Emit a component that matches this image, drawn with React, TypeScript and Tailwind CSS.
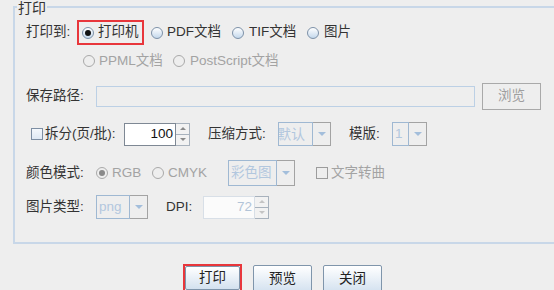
import React from 'react';

const FONT = "font-['Liberation_Sans','Noto_Sans_CJK_SC',sans-serif]";

function Radio({ checked = false, disabled = false }: { checked?: boolean; disabled?: boolean }) {
  return (
    <span
      className={
        disabled
          ? 'w-[12px] h-[12px] shrink-0 rounded-full border border-[#a9a9a9] bg-[#eeeeee] flex items-center justify-center'
          : 'w-[12px] h-[12px] shrink-0 rounded-full border border-[#7d91a8] bg-linear-to-b from-[#ffffff] to-[#c4d8ec] flex items-center justify-center'
      }
    >
      {checked && (
        <span className={disabled ? 'w-[6px] h-[6px] rounded-full bg-[#8a8a8a]' : 'w-[6px] h-[6px] rounded-full bg-[#111111]'} />
      )}
    </span>
  );
}

function Checkbox({ disabled = false }: { disabled?: boolean }) {
  return (
    <span
      className={
        disabled
          ? 'w-[12px] h-[12px] shrink-0 border border-[#9c9c9c] bg-[#eeeeee]'
          : 'w-[12px] h-[12px] shrink-0 border border-[#7d8ea3] bg-linear-to-b from-[#f4f8fc] to-[#dfe9f4]'
      }
    />
  );
}

function ArrowDown() {
  return <span className="w-0 h-0 border-l-[4px] border-r-[4px] border-t-[4px] border-l-transparent border-r-transparent border-t-[#a3bedb]" />;
}

function ArrowUpSmall({ color }: { color: string }) {
  return <span className={`w-0 h-0 border-l-[3px] border-r-[3px] border-b-[3px] border-l-transparent border-r-transparent ${color}`} />;
}

function ArrowDownSmall({ color }: { color: string }) {
  return <span className={`w-0 h-0 border-l-[3px] border-r-[3px] border-t-[3px] border-l-transparent border-r-transparent ${color}`} />;
}

function Combo({ text, fieldW, h, clip = false }: { text: string; fieldW: string; h: string; clip?: boolean }) {
  return (
    <div className={`flex ${h}`}>
      <div className={`${fieldW} h-full border border-[#9fb8d2] bg-[#eeeeee] overflow-hidden flex items-center text-[#b2c7de] whitespace-nowrap`}>
        <span className={clip ? 'text-[14px] -ml-[2px]' : 'pl-[2px]'}>{text}</span>
      </div>
      <div className="w-[18px] h-full border border-l-0 border-[#a3a3a3] bg-[#eeeeee] flex items-center justify-center">
        <ArrowDown />
      </div>
    </div>
  );
}

function Spinner({ value, disabled = false }: { value: string; disabled?: boolean }) {
  return (
    <div className="flex h-[23px]">
      <div
        className={
          disabled
            ? 'w-[52px] h-full border border-[#d8dfe7] bg-[#fbfbfb] flex items-center justify-end pr-[2px] text-[#b2c4d8]'
            : 'w-[52px] h-full border border-[#7e8894] bg-white flex items-center justify-end pr-[2px] text-[#111111]'
        }
      >
        {value}
      </div>
      <div className="w-[14px] h-full flex flex-col">
        <div className="flex-1 border border-l-0 border-[#a8b2bd] bg-[#f2f2f2] flex items-center justify-center">
          <ArrowUpSmall color={disabled ? 'border-b-[#c4c4c4]' : 'border-b-[#8a8a8a]'} />
        </div>
        <div className="flex-1 border border-l-0 border-t-0 border-[#a8b2bd] bg-[#f2f2f2] flex items-center justify-center">
          <ArrowDownSmall color={disabled ? 'border-t-[#c4c4c4]' : 'border-t-[#8a8a8a]'} />
        </div>
      </div>
    </div>
  );
}

function DialogButton({ label, focused = false }: { label: string; focused?: boolean }) {
  return (
    <div
      className={
        focused
          ? 'w-[59px] h-[28px] border-2 border-[#e8363b] flex'
          : 'w-[59px] h-[28px] flex mt-[1px]'
      }
    >
      <div className="flex-1 border border-[#7f95ab] rounded-[2px] bg-linear-to-b from-[#ffffff] to-[#d3e1ef] flex items-center justify-center text-[#222222]">
        {label}
      </div>
    </div>
  );
}

export default function App() {
  return (
    <div className={`w-[554px] h-[290px] overflow-hidden bg-[#eeeeee] text-[13.5px] text-[#333333] ${FONT} flex flex-col`}>
      <fieldset className="-mt-[2px] ml-[13px] w-[541px] border-2 border-r-0 border-[#c8d7e8] pb-[23px]">
        <legend className="ml-[2px] px-[1px] pt-[2px] leading-[16px] text-[14px] text-[#333333]">打印</legend>

        {/* 打印到 */}
        <div className="mt-[4px] h-[25px] pl-[11px] flex items-center">
          <span className="w-[51px]">打印到:</span>
          <div className="w-[67px] h-[25px] border-2 border-[#e8363b] flex items-center pl-[3px] gap-[4px]">
            <Radio checked />
            <span>打印机</span>
          </div>
          <div className="w-[81px] ml-[7px] flex items-center gap-[4px]">
            <Radio />
            <span>PDF文档</span>
          </div>
          <div className="w-[75px] flex items-center gap-[5px]">
            <Radio />
            <span>TIF文档</span>
          </div>
          <div className="flex items-center gap-[5px]">
            <Radio />
            <span>图片</span>
          </div>
        </div>

        <div className="mt-[4px] h-[24px] pl-[68px] flex items-center text-[#a3a3a3]">
          <div className="w-[90px] flex items-center gap-[4px]">
            <Radio disabled />
            <span>PPML文档</span>
          </div>
          <div className="flex items-center gap-[5px]">
            <Radio disabled />
            <span>PostScript文档</span>
          </div>
        </div>

        {/* 保存路径 */}
        <div className="mt-[9px] h-[28px] pl-[11px] flex items-center">
          <span className="w-[70px]">保存路径:</span>
          <div className="w-[379px] h-[21px] border border-[#bcd0e5] bg-[#eeeeee]" />
          <div className="ml-[7px] w-[59px] h-[27px] border border-[#a9a9a9] bg-[#eeeeee] flex items-center justify-center text-[#9e9e9e]">
            浏览
          </div>
        </div>

        {/* 拆分 / 压缩 / 模版 */}
        <div className="mt-[12px] h-[24px] pl-[16px] flex items-center">
          <div className="w-[93px] flex items-center gap-[2px]">
            <Checkbox />
            <span className="whitespace-nowrap">拆分(页/批):</span>
          </div>
          <Spinner value="100" />
          <span className="ml-[18px] w-[70px]">压缩方式:</span>
          <Combo text="默认" fieldW="w-[35px]" h="h-[24px]" clip />
          <span className="ml-[18px] w-[43px]">模版:</span>
          <Combo text="1" fieldW="w-[17px]" h="h-[24px]" />
        </div>

        {/* 颜色模式 */}
        <div className="mt-[14px] h-[26px] pl-[11px] flex items-center">
          <span className="w-[70px]">颜色模式:</span>
          <div className="w-[56px] flex items-center gap-[4px] text-[#a3a3a3]">
            <Radio checked disabled />
            <span>RGB</span>
          </div>
          <div className="w-[76px] flex items-center gap-[4px] text-[#a3a3a3]">
            <Radio disabled />
            <span>CMYK</span>
          </div>
          <Combo text="彩色图" fieldW="w-[49px]" h="h-[26px]" />
          <div className="ml-[21px] flex items-center gap-[3px] text-[#a3a3a3]">
            <Checkbox disabled />
            <span>文字转曲</span>
          </div>
        </div>

        {/* 图片类型 */}
        <div className="mt-[9px] h-[24px] pl-[11px] flex items-center">
          <span className="w-[70px]">图片类型:</span>
          <Combo text="png" fieldW="w-[34px]" h="h-[24px]" />
          <span className="ml-[18px] w-[37px]">DPI:</span>
          <Spinner value="72" disabled />
        </div>
      </fieldset>

      <div className="mt-[20px] pl-[183px] flex items-start gap-[11px]">
        <DialogButton label="打印" focused />
        <DialogButton label="预览" />
        <DialogButton label="关闭" />
      </div>
    </div>
  );
}
